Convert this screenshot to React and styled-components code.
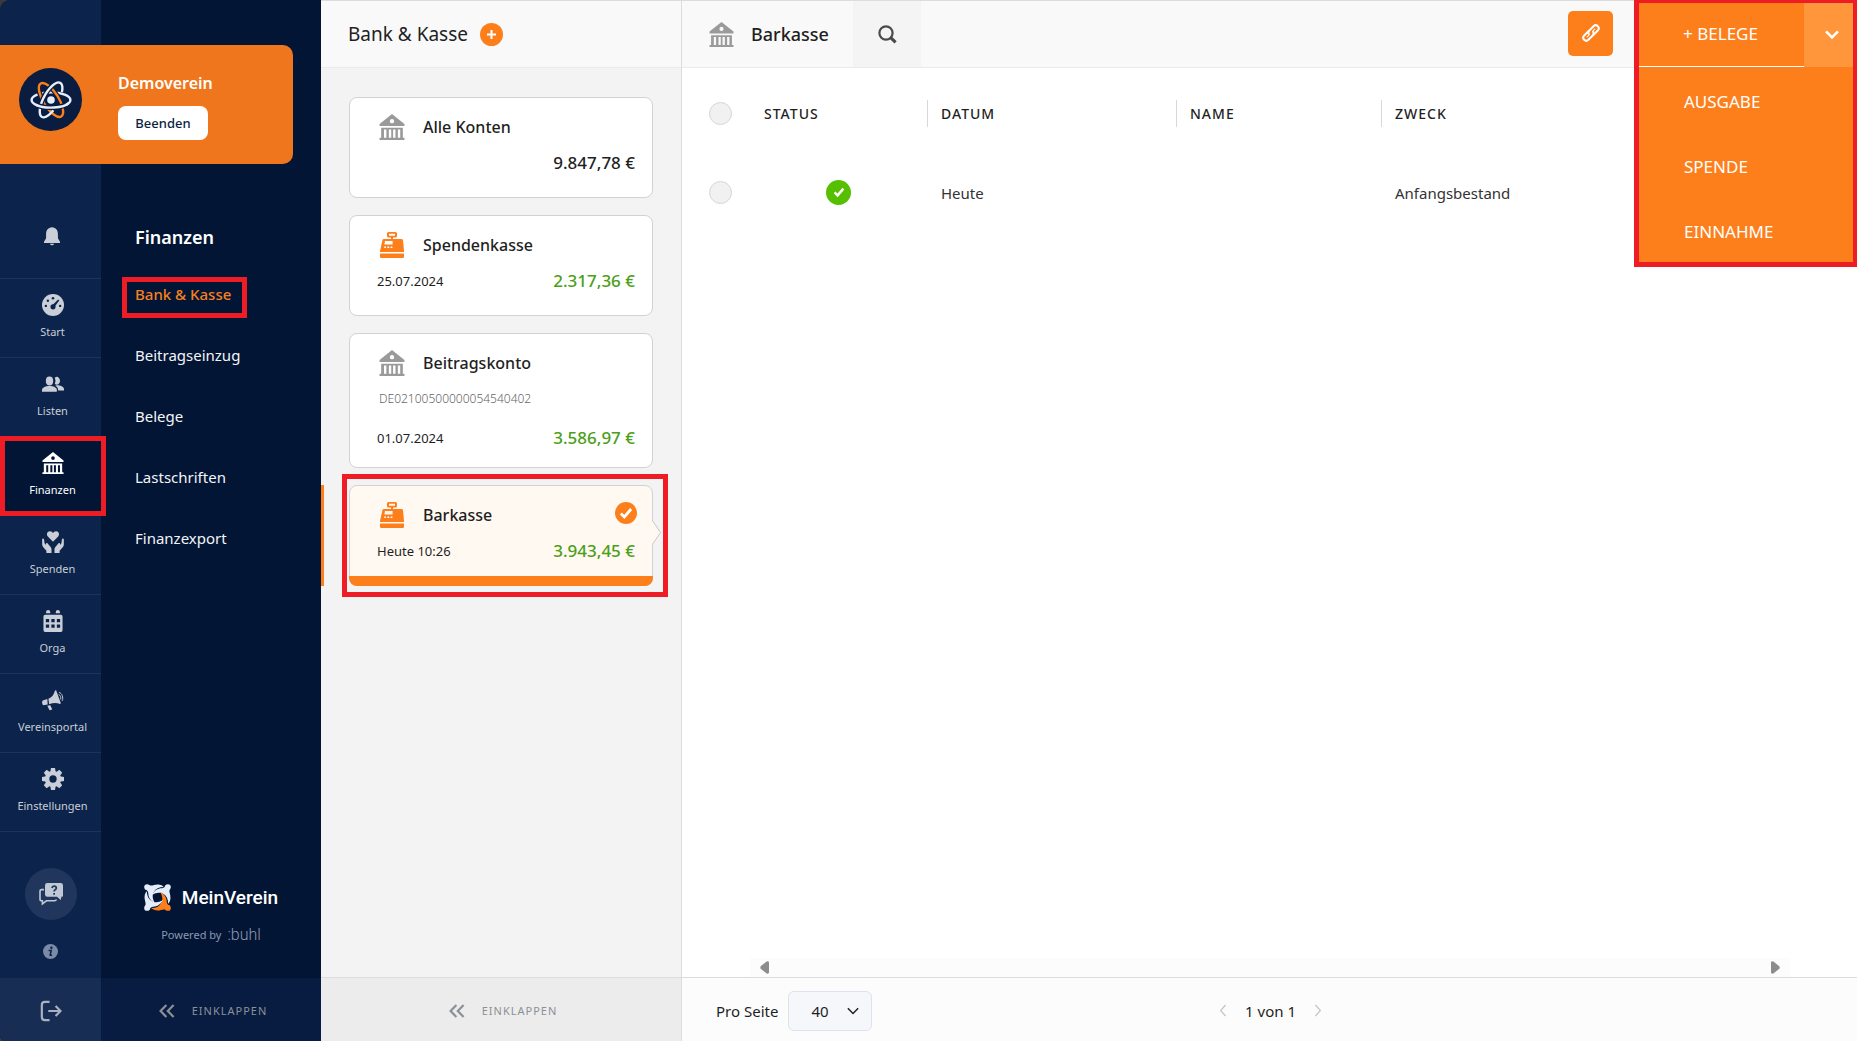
import React from 'react';
import styled, { createGlobalStyle } from 'styled-components';

const colors = {
  orange: '#fd7f1c',
  navy: '#021534',
  rail: '#0c244b',
  red: '#ee1c25',
  green: '#4aa017',
  text: '#1f1f1f',
  line: '#dcdcdc',
};

const GlobalStyle = createGlobalStyle`
  *, *::before, *::after {
    box-sizing: border-box;
  }

  body {
    margin: 0;
    background: #3a3a3a;
    color: ${colors.text};
    font-family: 'Noto Sans', 'Open Sans', sans-serif;
    font-size: 14px;
    line-height: 20px;
  }

  button, select, input {
    margin: 0;
    padding: 0;
    border: 0;
    background: none;
    color: inherit;
    font: inherit;
  }

  button {
    cursor: pointer;
  }

  a {
    color: inherit;
    text-decoration: none;
  }

  ul {
    margin: 0;
    padding: 0;
    list-style: none;
  }

  svg {
    display: block;
    flex: none;
  }
`;

/* ---------- icons ---------- */

const Icon = ({ size, children, box = 24 }) => (
  <svg
    width={size}
    height={size}
    viewBox={`0 0 ${box} ${box}`}
    fill="currentColor"
    aria-hidden="true"
  >
    {children}
  </svg>
);

const BankIcon = ({ size = 22 }) => (
  <Icon size={size}>
    <path
      fillRule="evenodd"
      d="M12 0 L23.5 9.2 V11 H0.5 V9.2 Z M12 4.6 a2 2 0 1 0 0 4 a2 2 0 1 0 0 -4 Z"
    />
    <path
      fillRule="evenodd"
      d="M2 12.6 H22 V22 H23.5 V24 H0.5 V22 H2 Z M4.6 14.4 V22 H6.8 V14.4 Z M9.1 14.4 V22 H11.3 V14.4 Z M13 14.4 V22 H15.2 V14.4 Z M17.4 14.4 V22 H19.6 V14.4 Z"
    />
  </Icon>
);

const RegisterIcon = ({ size = 26 }) => (
  <Icon size={size} box={26}>
    <path
      fillRule="evenodd"
      d="M9.5 0 H16.5 A1.5 1.5 0 0 1 18 1.5 V4 A1.5 1.5 0 0 1 16.5 5.5 H14 V7 H22.4 A1.6 1.6 0 0 1 24 8.2 L25 19 V20 H1 V19 L3.4 8.2 A1.6 1.6 0 0 1 5 7 H12 V5.5 H9.5 A1.5 1.5 0 0 1 8 4 V1.5 A1.5 1.5 0 0 1 9.5 0 Z M10 1.8 V3.8 H16 V1.8 Z M6 9 L5.4 12.4 H13.6 V9 Z M5.2 14.4 V16 H7 V14.4 Z M8.4 14.4 V16 H10.2 V14.4 Z M11.6 14.4 V16 H13.4 V14.4 Z"
    />
    <path d="M1 21.6 H25 V24.4 A1.4 1.4 0 0 1 23.6 26 H2.4 A1.4 1.4 0 0 1 1 24.4 Z" />
  </Icon>
);

const BellIcon = () => (
  <Icon size={20}>
    <path d="M12 1.6 C7.4 2 4.9 5 4.9 9.6 V14.6 L2.4 19 V20.4 H21.6 V19 L19.1 14.6 V9.6 C19.1 5 16.6 2 12 1.6 Z M9.6 21.2 H14.4 A2.4 1.8 0 0 1 9.6 21.2 Z" />
  </Icon>
);

const GaugeIcon = () => (
  <Icon size={22}>
    <circle cx="12" cy="12" r="12" />
    <g fill={colors.rail}>
      <circle cx="4.2" cy="13" r="1.3" />
      <circle cx="6.4" cy="7.4" r="1.3" />
      <circle cx="12" cy="4.6" r="1.4" />
      <circle cx="19.8" cy="13" r="1.3" />
      <circle cx="12" cy="14" r="2.8" />
      <path d="M11 12.6 L17.6 6 L18.8 7.2 L13.4 14.4 Z" />
    </g>
  </Icon>
);

const PeopleIcon = () => (
  <Icon size={22}>
    <ellipse cx="8.2" cy="8.6" rx="4" ry="4.9" />
    <path d="M0 20.4 V18.6 C0 15.8 4 14.2 8.2 14.2 S16.2 15.8 16.2 18.6 V20.4 Z" />
    <path d="M14 5.2 A3.4 4.2 0 1 1 14 11.8 A8 8 0 0 0 14 5.2 Z" />
    <path d="M16 13.4 C20 13.2 24 15 24 17.6 V19 H17.6 C17.6 16 16.4 14.6 14.4 13.8 Z" />
  </Icon>
);

const HandsIcon = () => (
  <Icon size={22}>
    <path d="M12 11.8 L6.6 6.4 C4.4 3.8 5.4 0.2 8.6 0.2 C10.4 0.2 11.4 1.2 12 2.2 C12.6 1.2 13.6 0.2 15.4 0.2 C18.6 0.2 19.6 3.8 17.4 6.4 Z" />
    <path d="M0.2 9 C0.2 8 2 8 2.2 9 L2.8 13.4 L4.6 15.6 C3.6 13.4 5 12.4 6.2 13.6 L9.4 17.4 C10.2 18.4 10.4 19.2 10.4 20.4 V24 H4.8 V21.6 L1.4 17.8 C0.6 16.8 0.4 16 0.2 15 Z" />
    <path d="M23.8 9 C23.8 8 22 8 21.8 9 L21.2 13.4 L19.4 15.6 C20.4 13.4 19 12.4 17.8 13.6 L14.6 17.4 C13.8 18.4 13.6 19.2 13.6 20.4 V24 H19.2 V21.6 L22.6 17.8 C23.4 16.8 23.6 16 23.8 15 Z" />
  </Icon>
);

const CalendarIcon = () => (
  <Icon size={22}>
    <path d="M4.4 3.6 V2.4 A2.3 2.3 0 0 1 9 2.4 V3.6 Z M15 3.6 V2.4 A2.3 2.3 0 0 1 19.6 2.4 V3.6 Z" />
    <path
      fillRule="evenodd"
      d="M3.4 5.2 H20.6 A1.8 1.8 0 0 1 22.4 7 V22.2 A1.8 1.8 0 0 1 20.6 24 H3.4 A1.8 1.8 0 0 1 1.6 22.2 V7 A1.8 1.8 0 0 1 3.4 5.2 Z M4.2 9.8 V13.4 H7.8 V9.8 Z M10.2 9.8 V13.4 H13.8 V9.8 Z M16.2 9.8 V13.4 H19.8 V9.8 Z M4.2 15.8 V19.4 H7.8 V15.8 Z M10.2 15.8 V19.4 H13.8 V15.8 Z M16.2 15.8 V19.4 H19.8 V15.8 Z"
    />
  </Icon>
);

const MegaphoneIcon = () => (
  <Icon size={22}>
    <path d="M5.8 11 L0.8 12.6 C-0.2 13.2 -0.2 17 1.6 17.6 L6.2 17 Z" />
    <path d="M7 10.6 C10.6 9.2 13.2 6 14.2 1.6 L15.4 1.4 L20.6 15.6 L19.6 16.4 C16 14.6 12 14.8 7.8 16.6 Z" />
    <path d="M5.8 18.2 L9 17.6 L11.2 22.4 L8.2 23.2 Z" />
    <g fill="none" stroke="currentColor" strokeWidth="1">
      <path d="M18 5.8 C20 6.6 21 9.4 20.4 11.4" />
      <path d="M18.6 3.6 C22 4.8 23.6 9.4 22 13" />
    </g>
  </Icon>
);

const GearIcon = () => (
  <Icon size={22}>
    <path
      fillRule="evenodd"
      d="M12 3.2 a8.8 8.8 0 1 0 0 17.6 a8.8 8.8 0 1 0 0 -17.6 Z M12 8 a4 4 0 1 1 0 8 a4 4 0 1 1 0 -8 Z"
    />
    {[0, 45, 90, 135, 180, 225, 270, 315].map(angle => (
      <path
        key={angle}
        transform={`rotate(${angle} 12 12)`}
        d="M9.8 0 H14.2 L15 5 H9 Z"
      />
    ))}
  </Icon>
);

const HelpIcon = () => (
  <Icon size={24}>
    <path
      fillRule="evenodd"
      d="M8.4 1 H21.6 A2.4 2.4 0 0 1 24 3.4 V14.6 L22.6 14.6 L21.6 18 L18 14.8 H8.4 A2.4 2.4 0 0 1 6 12.4 V3.4 A2.4 2.4 0 0 1 8.4 1 Z"
    />
    <path
      d="M5 7.6 H2.6 Q1 7.6 1 9.4 V17 Q1 18.8 2.6 18.8 H3.4 V21.8 L7.4 18.8 H15.6 Q17 18.8 17.4 17.6"
      fill="none"
      stroke="currentColor"
      strokeWidth="1.6"
    />
    <path
      d="M12.9 6 Q13.2 4.2 15.1 4.2 Q17.3 4.2 17.3 6 Q17.3 7.2 16.1 7.8 Q15.1 8.3 15.1 9.6 M15.1 11 V12.8"
      fill="none"
      stroke="#20365c"
      strokeWidth="1.7"
    />
  </Icon>
);

const InfoIcon = () => (
  <Icon size={15}>
    <circle cx="12" cy="12" r="12" />
    <circle cx="13.4" cy="5.8" r="2" fill={colors.rail} />
    <path
      d="M9 10.2 H13.2 L11.4 17.6 Q11.4 18.8 14.4 17.4"
      fill="none"
      stroke={colors.rail}
      strokeWidth="2.4"
    />
  </Icon>
);

const LogoutIcon = () => (
  <Icon size={22}>
    <g fill="none" stroke="currentColor" strokeWidth="2.4">
      <path d="M10.4 2 H5.4 Q2 2 2 5.4 V18.6 Q2 22 5.4 22 H10.4" />
      <path d="M9 12 H22 M17 6.6 L22.4 12 L17 17.4" />
    </g>
  </Icon>
);

const DoubleChevron = () => (
  <svg width="16" height="14" viewBox="0 0 16 14" aria-hidden="true">
    <path
      d="M7.4 1 L1.6 7 L7.4 13 M14.6 1 L8.8 7 L14.6 13"
      fill="none"
      stroke="currentColor"
      strokeWidth="2.2"
    />
  </svg>
);

const Chevron = ({ width, height, stroke = 2 }) => (
  <svg width={width} height={height} viewBox="0 0 14 9" aria-hidden="true">
    <path
      d="M1 1.4 L7 7.4 L13 1.4"
      fill="none"
      stroke="currentColor"
      strokeWidth={stroke}
    />
  </svg>
);

const PageArrow = ({ next }) => (
  <svg width="8" height="13" viewBox="0 0 8 13" aria-hidden="true">
    <path
      d={next ? 'M1.4 1 L6.4 6.5 L1.4 12' : 'M6.6 1 L1.6 6.5 L6.6 12'}
      fill="none"
      stroke="currentColor"
      strokeWidth="1.2"
    />
  </svg>
);

const SearchIcon = () => (
  <svg width="19" height="19" viewBox="0 0 19 19" aria-hidden="true">
    <g fill="none" stroke="currentColor">
      <circle cx="8" cy="8" r="6.6" strokeWidth="2.2" />
      <path d="M12.4 12.4 L17.6 17.4" strokeWidth="3.2" />
    </g>
  </svg>
);

const LinkIcon = () => (
  <svg width="20" height="20" viewBox="0 0 20 20" aria-hidden="true">
    <g
      fill="none"
      stroke="currentColor"
      strokeWidth="2"
      strokeLinecap="round"
      transform="rotate(-45 10 10)"
    >
      <path d="M10.6 13 H16.6 A3 3 0 0 0 16.6 7 H10.6 A3 3 0 0 0 7.8 9" />
      <path d="M9.4 7 H3.4 A3 3 0 0 0 3.4 13 H9.4 A3 3 0 0 0 12.2 11" />
      <path d="M4.6 10 H7.6 M12.4 10 H15.4" strokeWidth="1.2" />
    </g>
  </svg>
);

const CheckIcon = ({ size }) => (
  <svg width={size} height={size} viewBox="0 0 12 12" aria-hidden="true">
    <path
      d="M1.6 6.4 L4.6 9.4 L10.4 2.6"
      fill="none"
      stroke="currentColor"
      strokeWidth="2.4"
    />
  </svg>
);

const AtomIcon = () => (
  <svg width="44" height="44" viewBox="-22 -22 44 44" aria-hidden="true">
    <g fill="none" strokeWidth="2.4">
      <ellipse rx="19.4" ry="7.6" stroke="#e4edfb" />
      <ellipse rx="19.4" ry="7.6" stroke="#0a1c3f" strokeWidth="5" transform="rotate(58)" />
      <ellipse rx="19.4" ry="7.6" stroke={colors.orange} transform="rotate(58)" />
      <path
        d="M-19.4 0 A19.4 7.6 0 0 1 12 -6"
        stroke="#0a1c3f"
        strokeWidth="5"
        transform="rotate(-62)"
      />
      <path
        d="M-8 6.9 A19.4 7.6 0 1 1 12 6"
        stroke="#e4edfb"
        transform="rotate(-62)"
      />
      <path d="M-12 6 A19.4 7.6 0 0 0 15 4.8" stroke="#0a1c3f" strokeWidth="5" />
      <path d="M-15 4.8 A19.4 7.6 0 0 0 18 2.8" stroke="#e4edfb" />
    </g>
    <circle r="3.8" fill="#e4edfb" />
  </svg>
);

const LogoMark = () => (
  <svg width="27" height="27" viewBox="-13.5 -13.5 27 27" aria-hidden="true">
    {[0, 90, 180, 270].map(angle => (
      <g
        key={angle}
        transform={`rotate(${angle})`}
        fill={angle === 180 ? colors.orange : '#e4edfb'}
      >
        <circle cx="-10.4" cy="-10.4" r="2.9" />
        <path d="M-12.4 -8.2 L-8.2 -12.4 C-5.6 -10.8 -3 -13.6 2 -12.8 C4 -12.4 5.4 -11.6 6.2 -10.6 C1.4 -10.6 -1.6 -9 -3.4 -6 C-5.4 -3 -5.4 1 -2.6 5.4 C-7.4 3.4 -9.4 -1 -9.2 -4.6 C-9.6 -7 -11 -7.4 -12.4 -8.2 Z" />
      </g>
    ))}
  </svg>
);

/* ---------- layout ---------- */

const Page = styled.div`
  display: flex;
  min-height: 100vh;
`;

const Sidebar = styled.aside`
  position: relative;
  display: flex;
  flex: none;
  overflow: hidden;
  border-radius: 10px 0 0 6px;
  background: ${colors.navy};
  color: #fff;
`;

const Marker = styled.span`
  position: absolute;
  z-index: 3;
  inset: ${({ $inset }) => $inset};
  border: 5px solid ${colors.red};
  pointer-events: none;
`;

/* club banner */

const Banner = styled.section`
  position: absolute;
  z-index: 1;
  top: 45px;
  left: 0;
  display: flex;
  align-items: flex-start;
  gap: 36px;
  width: 293px;
  height: 119px;
  padding: 23px 19px;
  border-radius: 0 10px 10px 0;
  background: #ef761c;
`;

const Avatar = styled.span`
  display: grid;
  place-items: center;
  width: 63px;
  height: 63px;
  border-radius: 50%;
  background: #0a1c3f;
`;

const BannerTitle = styled.h2`
  margin: 3px 0 11px;
  font-size: 16px;
  font-weight: 600;
  line-height: 24px;
`;

const EndButton = styled.button`
  width: 90px;
  height: 34px;
  border-radius: 8px;
  background: #fff;
  color: #0c1f42;
  font-size: 13px;
  font-weight: 500;
`;

/* icon rail */

const Rail = styled.nav`
  display: flex;
  flex-direction: column;
  width: 101px;
  padding-top: 193px;
  background: ${colors.rail};
`;

const BellButton = styled.button`
  display: grid;
  place-items: center;
  height: 86px;
  padding-left: 2px;
  border-bottom: 1px solid #1b345e;
  color: #c9ced8;
`;

const RailEntry = styled.li`
  position: relative;
`;

const RailLink = styled.a`
  display: flex;
  flex-direction: column;
  align-items: center;
  gap: 6px;
  height: 79px;
  padding: 15px 0 0 4px;
  border-bottom: 1px solid #1b345e;
  background: ${({ $active }) => ($active ? colors.navy : 'transparent')};
  color: ${({ $active }) => ($active ? '#fff' : '#c9ced8')};
  font-size: 11px;
`;

const RailTools = styled.div`
  display: flex;
  flex-direction: column;
  align-items: center;
  gap: 24px;
  margin-top: auto;
  padding-bottom: 19px;
`;

const HelpButton = styled.button`
  display: grid;
  place-items: center;
  width: 52px;
  height: 52px;
  border-radius: 50%;
  background: #20365c;
  color: #c0c8d6;
`;

const InfoButton = styled.button`
  color: #7b8aa6;
`;

const LogoutButton = styled.button`
  display: grid;
  place-items: center;
  height: 63px;
  padding-top: 2px;
  background: #182d54;
  color: #a9b1bf;
`;

/* sub navigation */

const SubNav = styled.nav`
  display: flex;
  flex-direction: column;
  width: 220px;
  padding-top: 222px;
`;

const SubNavTitle = styled.h1`
  margin: 0 0 11px 34px;
  font-size: 18px;
  font-weight: 600;
  line-height: 30px;
`;

const SubNavEntry = styled.li`
  position: relative;
  display: flex;
  align-items: center;
  width: fit-content;
  height: 61px;
  margin-left: 34px;
`;

const SubNavLink = styled.a`
  color: ${({ $active }) => ($active ? '#f5801f' : '#f2f4f8')};
  font-size: 15px;
  font-weight: ${({ $active }) => ($active ? 500 : 400)};
`;

const Brand = styled.div`
  display: flex;
  flex-direction: column;
  align-items: center;
  gap: 14px;
  margin-top: auto;
  padding-bottom: 33px;
`;

const BrandName = styled.div`
  display: flex;
  align-items: center;
  gap: 11px;
  height: 27px;
  font-family: Roboto, sans-serif;
  font-size: 19px;
  font-weight: 500;
`;

const PoweredBy = styled.div`
  display: flex;
  align-items: center;
  gap: 6px;
  height: 20px;
  color: #8b98b2;
  font-size: 11px;
`;

const Buhl = styled.span`
  font-family: Roboto, sans-serif;
  font-size: 16px;
  font-weight: 300;
`;

const CollapseButton = styled.button`
  display: flex;
  align-items: center;
  justify-content: center;
  gap: 17px;
  height: ${({ $dark }) => ($dark ? '63px' : '64px')};
  padding: 2px 0 0 4px;
  border-top: ${({ $dark }) => ($dark ? '0' : `1px solid ${colors.line}`)};
  background: ${({ $dark }) => ($dark ? '#081c42' : '#ececec')};
  color: #8c9096;
  font-size: 11px;
  letter-spacing: 1px;
`;

/* accounts */

const Accounts = styled.section`
  display: flex;
  flex: none;
  flex-direction: column;
  width: 361px;
  border-top: 1px solid ${colors.line};
  border-right: 1px solid ${colors.line};
  background: #f3f3f3;
`;

const AccountsHeader = styled.header`
  display: flex;
  align-items: center;
  gap: 12px;
  height: 67px;
  padding-left: 27px;
  border-bottom: 1px solid #ebebeb;
  background: #f9f9f9;
`;

const Heading = styled.h2`
  margin: 0;
  font-size: ${({ $large }) => ($large ? '19px' : '18px')};
  font-weight: ${({ $large }) => ($large ? 400 : 500)};
  line-height: 24px;
`;

const AddButton = styled.button`
  display: grid;
  place-items: center;
  width: 23px;
  height: 23px;
  border-radius: 50%;
  background: ${colors.orange};
  color: #fff;
`;

const AccountList = styled.ul`
  display: flex;
  flex: 1;
  flex-direction: column;
  gap: 17px;
  padding: 29px 28px;
`;

const AccountEntry = styled.li`
  position: relative;
  display: flex;
`;

const AccountCard = styled.button`
  position: relative;
  display: flex;
  flex: 1;
  flex-direction: column;
  gap: 10px;
  min-height: 101px;
  padding: 15px 17px 17px 27px;
  border: 1px solid #d2d2d2;
  border-radius: 8px;
  background: ${({ $active }) => ($active ? '#fff9f2' : '#fff')};
  text-align: left;
`;

const ActiveBar = styled.span`
  position: absolute;
  inset: auto -1px -1px;
  height: 10px;
  border-radius: 0 0 8px 8px;
  background: ${colors.orange};
`;

const ActiveEdge = styled.span`
  position: absolute;
  top: 0;
  bottom: 0;
  left: -28px;
  width: 3px;
  background: ${colors.orange};
`;

const CardArrow = styled.svg`
  position: absolute;
  top: 33px;
  right: -10px;
`;

const CardCheck = styled.span`
  position: absolute;
  top: 16px;
  right: 15px;
  display: grid;
  place-items: center;
  width: 22px;
  height: 22px;
  border-radius: 50%;
  background: ${colors.orange};
  color: #fff;
`;

const AccountTitle = styled.span`
  display: flex;
  align-items: center;
  gap: 18px;
  height: 28px;
  padding-left: 2px;
  color: ${({ $cash }) => ($cash ? colors.orange : '#9a9a9a')};
`;

const AccountName = styled.span`
  color: ${colors.text};
  font-size: 16px;
  font-weight: 500;
`;

const Iban = styled.span`
  height: 24px;
  margin-bottom: 5px;
  padding-left: 2px;
  color: #666;
  font-size: 12px;
  font-weight: 300;
  line-height: 24px;
`;

const AccountFigures = styled.span`
  display: flex;
  align-items: center;
  justify-content: space-between;
  height: 24px;
  font-size: 13px;
`;

const Amount = styled.strong`
  margin-left: auto;
  color: ${({ $plain }) => ($plain ? colors.text : colors.green)};
  font-size: 17px;
  font-weight: 500;
`;

/* bookings */

const Main = styled.main`
  position: relative;
  display: flex;
  flex: 1;
  flex-direction: column;
  min-width: 0;
  border-top: 1px solid ${colors.line};
  background: #fff;
`;

const MainHeader = styled.header`
  display: flex;
  align-items: center;
  height: 67px;
  padding: 0 244px 0 27px;
  border-bottom: 1px solid #ebebeb;
  background: #f9f9f9;
`;

const MainTitle = styled.div`
  display: flex;
  align-items: center;
  gap: 17px;
  width: 144px;
  color: #9a9a9a;

  ${Heading} {
    color: ${colors.text};
  }
`;

const SearchButton = styled.button`
  display: grid;
  place-items: center;
  width: 68px;
  height: 66px;
  background: #f4f4f4;
  color: #4a4a4a;
`;

const LinkButton = styled.button`
  display: grid;
  place-items: center;
  width: 45px;
  height: 45px;
  margin: 0 0 2px auto;
  border-radius: 5px;
  background: ${colors.orange};
  color: #fff;
`;

const ActionMenu = styled.div`
  position: absolute;
  z-index: 2;
  top: -1px;
  right: 0;
  width: 223px;
  border: 5px solid ${colors.red};
  border-width: 3px 4px 5px 5px;
  background: ${colors.orange};
  color: #fff;
  font-size: 17px;
`;

const SplitButton = styled.div`
  display: flex;
  height: 64px;
`;

const NewReceipt = styled.button`
  flex: 1;
  padding: 0 2px 2px 0;
  border-bottom: 1px solid #fff;
`;

const MenuToggle = styled.button`
  display: grid;
  place-items: center;
  width: 49px;
  padding: 0 0 2px 6px;
  background: #ff963c;
`;

const ActionItem = styled.button`
  display: block;
  width: 100%;
  height: 65px;
  padding: 4px 0 0 45px;
  text-align: left;
`;

const Bookings = styled.table`
  width: 100%;
  border-collapse: collapse;
  table-layout: fixed;
`;

const Column = styled.col`
  width: ${({ $width }) => $width};
`;

const HeadCell = styled.th`
  height: 90px;
  padding: 0;
  font-weight: 500;
  text-align: left;
`;

const HeadLabel = styled.span`
  display: block;
  padding-left: 13px;
  border-left: 1px solid ${({ $first }) => ($first ? 'transparent' : '#d8d8d8')};
  letter-spacing: 1px;
  line-height: 27px;
`;

const Cell = styled.td`
  height: 70px;
  padding: 0 0 0 14px;
  color: #333;
  font-size: 15px;
`;

const MarkCell = styled(Cell)`
  padding: 0 0 2px;
`;

const RoundCheckbox = styled.input`
  display: block;
  width: 23px;
  height: 23px;
  margin-left: 27px;
  border: 1px solid #d6d6d6;
  border-radius: 50%;
  background: #f1f1f1;
  appearance: none;
`;

const StatusBadge = styled.span`
  display: grid;
  place-items: center;
  width: 25px;
  height: 25px;
  margin: 0 auto;
  border-radius: 50%;
  background: #56c000;
  color: #fff;
`;

const ScrollTrack = styled.div`
  display: flex;
  align-items: center;
  justify-content: space-between;
  height: 19px;
  margin: auto 67px 0 68px;
  padding: 0 10px;
  background: #fcfcfc;
  color: #8c8c8c;
`;

const MainFooter = styled.footer`
  display: grid;
  grid-template-columns: 1fr auto 1fr;
  align-items: center;
  height: 64px;
  padding: 2px 32px 0 34px;
  border-top: 1px solid ${colors.line};
  background: #fcfcfc;
  font-size: 15px;
`;

const PageSize = styled.label`
  position: relative;
  display: flex;
  align-items: center;
  gap: 10px;
  width: fit-content;
`;

const PageSizeSelect = styled.select`
  width: 84px;
  height: 40px;
  padding-left: 22px;
  border: 1px solid #dde2ee;
  border-radius: 6px;
  background: #f5f7fb;
  appearance: none;
`;

const SelectArrow = styled.span`
  position: absolute;
  right: 13px;
  pointer-events: none;
`;

const Pager = styled.div`
  display: flex;
  align-items: center;
  gap: 18px;
`;

const PagerButton = styled.button`
  color: #c4c4c4;
`;

const railItems = [
  { label: 'Start', icon: <GaugeIcon /> },
  { label: 'Listen', icon: <PeopleIcon /> },
  { label: 'Finanzen', icon: <BankIcon />, active: true },
  { label: 'Spenden', icon: <HandsIcon /> },
  { label: 'Orga', icon: <CalendarIcon /> },
  { label: 'Vereinsportal', icon: <MegaphoneIcon /> },
  { label: 'Einstellungen', icon: <GearIcon /> },
];

const subItems = [
  'Bank & Kasse',
  'Beitragseinzug',
  'Belege',
  'Lastschriften',
  'Finanzexport',
];

const accounts = [
  { name: 'Alle Konten', amount: '9.847,78 €', plain: true },
  { name: 'Spendenkasse', amount: '2.317,36 €', date: '25.07.2024', cash: true },
  {
    name: 'Beitragskonto',
    amount: '3.586,97 €',
    date: '01.07.2024',
    iban: 'DE02100500000054540402',
  },
  {
    name: 'Barkasse',
    amount: '3.943,45 €',
    date: 'Heute 10:26',
    cash: true,
    active: true,
  },
];

const Account = ({ name, amount, date, iban, cash, plain, active }) => (
  <AccountEntry>
    {active && <ActiveEdge />}
    <AccountCard type="button" $active={active} aria-pressed={Boolean(active)}>
      <AccountTitle $cash={cash}>
        {cash ? <RegisterIcon /> : <BankIcon size={26} />}
        <AccountName>{name}</AccountName>
      </AccountTitle>
      {iban && <Iban>{iban}</Iban>}
      <AccountFigures>
        {date && <span>{date}</span>}
        <Amount $plain={plain}>{amount}</Amount>
      </AccountFigures>
      {active && (
        <>
          <CardCheck>
            <CheckIcon size={14} />
          </CardCheck>
          <CardArrow width="10" height="27" viewBox="0 0 10 27" aria-hidden="true">
            <path d="M0 1 L8.6 13.5 L0 26" fill="#fff9f2" stroke="#c8c8c8" />
          </CardArrow>
          <ActiveBar />
        </>
      )}
    </AccountCard>
    {active && <Marker $inset="-11px -15px -11px -7px" />}
  </AccountEntry>
);

const Navigation = () => (
  <Sidebar>
    <Banner>
      <Avatar>
        <AtomIcon />
      </Avatar>
      <div>
        <BannerTitle>Demoverein</BannerTitle>
        <EndButton type="button">Beenden</EndButton>
      </div>
    </Banner>
    <Rail>
      <BellButton type="button" aria-label="Benachrichtigungen">
        <BellIcon />
      </BellButton>
      <ul>
        {railItems.map(({ label, icon, active }) => (
          <RailEntry key={label}>
            <RailLink href="#" $active={active}>
              {icon}
              {label}
            </RailLink>
            {active && <Marker $inset="-1px -5px 0 0" />}
          </RailEntry>
        ))}
      </ul>
      <RailTools>
        <HelpButton type="button" aria-label="Hilfe">
          <HelpIcon />
        </HelpButton>
        <InfoButton type="button" aria-label="Info">
          <InfoIcon />
        </InfoButton>
      </RailTools>
      <LogoutButton type="button" aria-label="Abmelden">
        <LogoutIcon />
      </LogoutButton>
    </Rail>
    <SubNav>
      <SubNavTitle>Finanzen</SubNavTitle>
      <ul>
        {subItems.map((label, index) => (
          <SubNavEntry key={label}>
            <SubNavLink href="#" $active={index === 0}>
              {label}
            </SubNavLink>
            {index === 0 && <Marker $inset="14px -16px 6px -13px" />}
          </SubNavEntry>
        ))}
      </ul>
      <Brand>
        <BrandName>
          <LogoMark />
          MeinVerein
        </BrandName>
        <PoweredBy>
          Powered by <Buhl>:buhl</Buhl>
        </PoweredBy>
      </Brand>
      <CollapseButton type="button" $dark>
        <DoubleChevron />
        EINKLAPPEN
      </CollapseButton>
    </SubNav>
  </Sidebar>
);

const App = () => (
  <Page>
    <GlobalStyle />
    <Navigation />
    <Accounts>
      <AccountsHeader>
        <Heading $large>Bank &amp; Kasse</Heading>
        <AddButton type="button" aria-label="Konto hinzufügen">
          <svg width="11" height="11" viewBox="0 0 11 11" aria-hidden="true">
            <path d="M5.5 1 V10 M1 5.5 H10" stroke="currentColor" strokeWidth="2" />
          </svg>
        </AddButton>
      </AccountsHeader>
      <AccountList>
        {accounts.map(account => (
          <Account key={account.name} {...account} />
        ))}
      </AccountList>
      <CollapseButton type="button">
        <DoubleChevron />
        EINKLAPPEN
      </CollapseButton>
    </Accounts>
    <Main>
      <MainHeader>
        <MainTitle>
          <BankIcon size={25} />
          <Heading>Barkasse</Heading>
        </MainTitle>
        <SearchButton type="button" aria-label="Suchen">
          <SearchIcon />
        </SearchButton>
        <LinkButton type="button" aria-label="Verknüpfen">
          <LinkIcon />
        </LinkButton>
      </MainHeader>
      <ActionMenu>
        <SplitButton>
          <NewReceipt type="button">+ BELEGE</NewReceipt>
          <MenuToggle type="button" aria-label="Menü" aria-expanded="true">
            <Chevron width={14} height={9} stroke={2.6} />
          </MenuToggle>
        </SplitButton>
        <ul>
          {['AUSGABE', 'SPENDE', 'EINNAHME'].map(label => (
            <li key={label}>
              <ActionItem type="button">{label}</ActionItem>
            </li>
          ))}
        </ul>
      </ActionMenu>
      <Bookings>
        <colgroup>
          <Column $width="68px" />
          <Column $width="177px" />
          <Column $width="249px" />
          <Column $width="205px" />
          <Column $width="auto" />
        </colgroup>
        <thead>
          <tr>
            <HeadCell>
              <RoundCheckbox type="checkbox" aria-label="Alle auswählen" />
            </HeadCell>
            {['STATUS', 'DATUM', 'NAME', 'ZWECK'].map((label, index) => (
              <HeadCell key={label}>
                <HeadLabel $first={index === 0}>{label}</HeadLabel>
              </HeadCell>
            ))}
          </tr>
        </thead>
        <tbody>
          <tr>
            <MarkCell>
              <RoundCheckbox type="checkbox" aria-label="Buchung auswählen" />
            </MarkCell>
            <MarkCell>
              <StatusBadge>
                <CheckIcon size={12} />
              </StatusBadge>
            </MarkCell>
            <Cell>Heute</Cell>
            <Cell />
            <Cell>Anfangsbestand</Cell>
          </tr>
        </tbody>
      </Bookings>
      <ScrollTrack>
        <button type="button" aria-label="Nach links">
          <svg width="9" height="13" viewBox="0 0 9 13" aria-hidden="true">
            <path d="M0.4 5.6 L6.6 0.4 Q9 0 9 1.4 V11.6 Q9 13 6.6 12.6 L0.4 7.4 Z" fill="currentColor" />
          </svg>
        </button>
        <button type="button" aria-label="Nach rechts">
          <svg width="9" height="13" viewBox="0 0 9 13" aria-hidden="true">
            <path d="M8.6 5.6 L2.4 0.4 Q0 0 0 1.4 V11.6 Q0 13 2.4 12.6 L8.6 7.4 Z" fill="currentColor" />
          </svg>
        </button>
      </ScrollTrack>
      <MainFooter>
        <PageSize>
          Pro Seite
          <PageSizeSelect defaultValue="40">
            <option>20</option>
            <option>40</option>
            <option>100</option>
          </PageSizeSelect>
          <SelectArrow>
            <Chevron width={12} height={8} stroke={1.7} />
          </SelectArrow>
        </PageSize>
        <Pager>
          <PagerButton type="button" aria-label="Vorherige Seite">
            <PageArrow />
          </PagerButton>
          <span>1 von 1</span>
          <PagerButton type="button" aria-label="Nächste Seite">
            <PageArrow next />
          </PagerButton>
        </Pager>
      </MainFooter>
    </Main>
  </Page>
);

export default App;
